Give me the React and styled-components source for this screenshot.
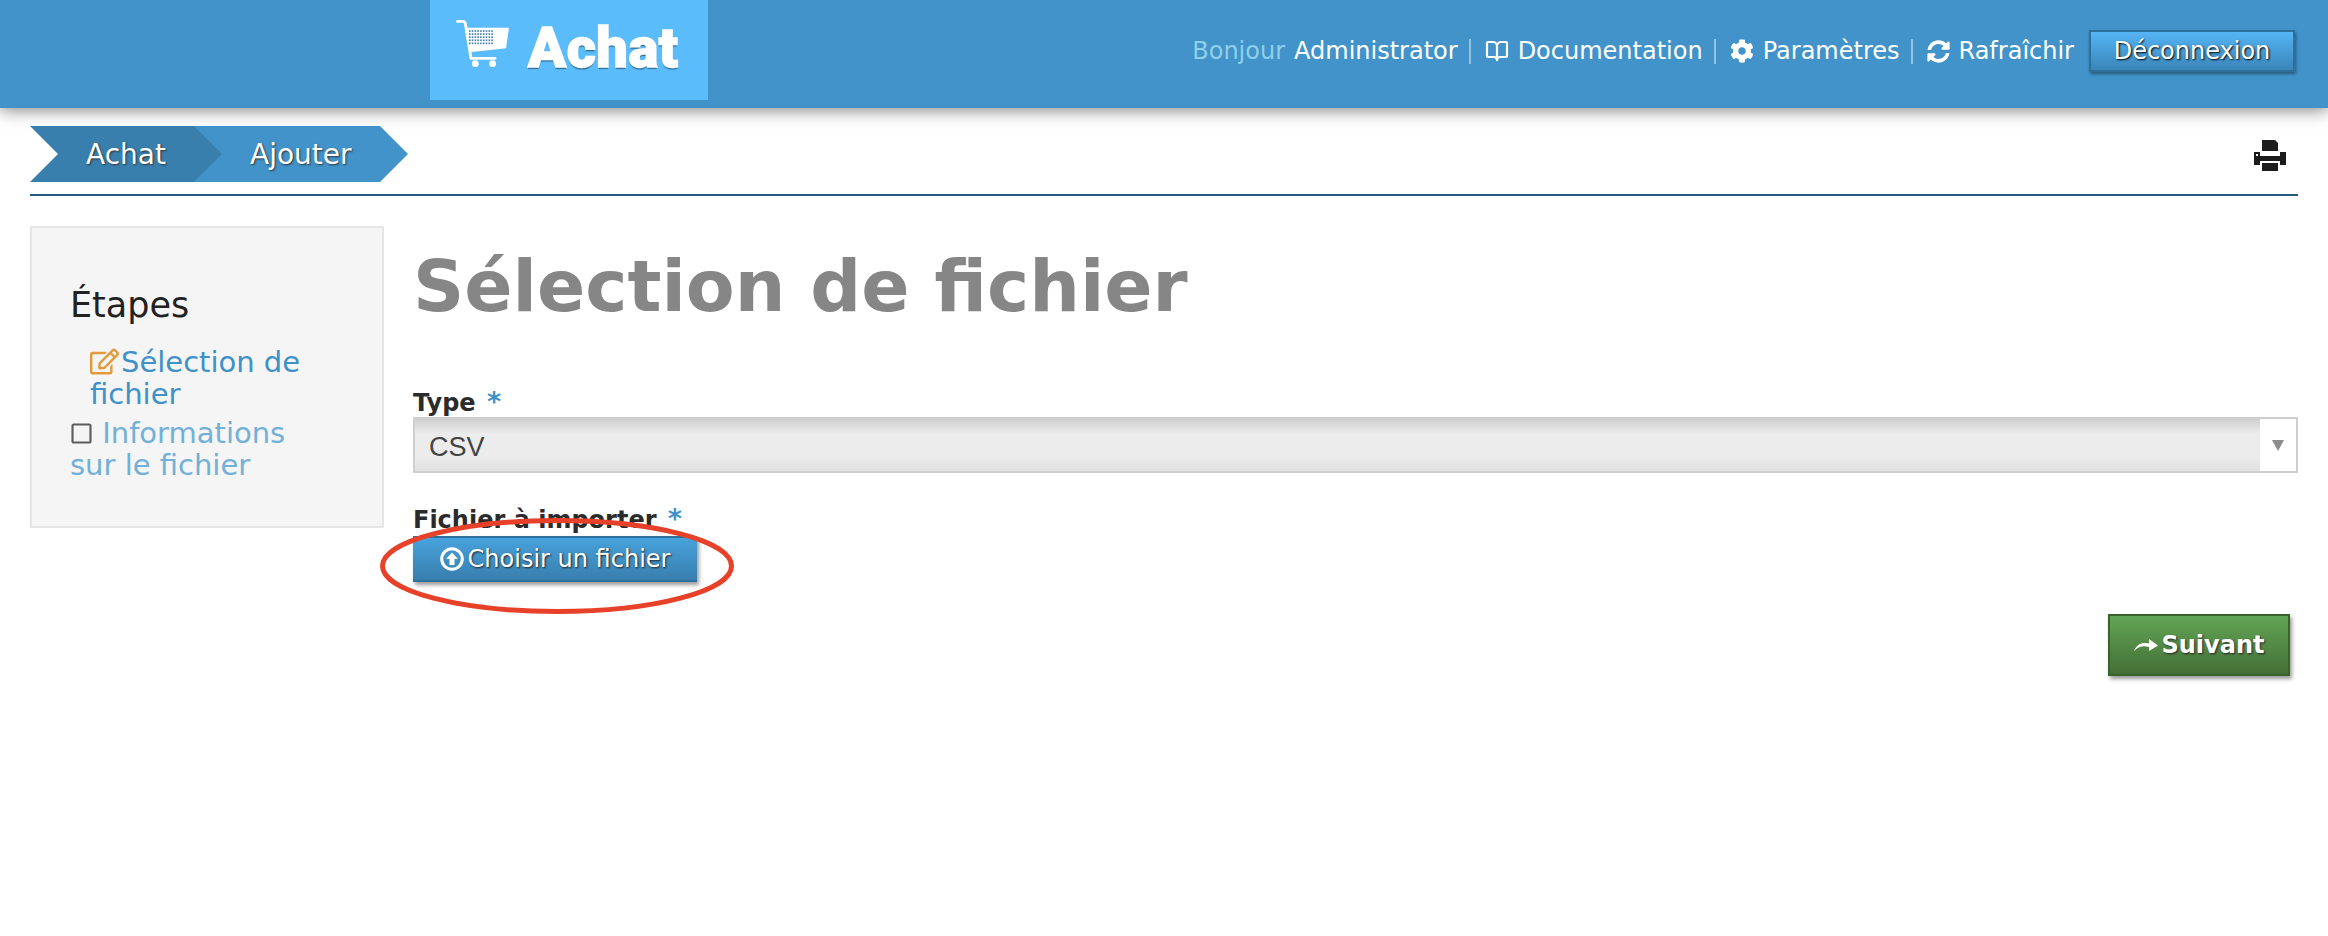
import styled, { createGlobalStyle } from "styled-components";
import { FaCog, FaRegEdit, FaRegSquare, FaSyncAlt } from "react-icons/fa";
import { BookOpen } from "lucide-react";

const GlobalStyle = createGlobalStyle`
  html, body {
    margin: 0;
    background: #fff;
    font-family: "DejaVu Sans", Verdana, sans-serif;
  }
`;

const CartIcon = () => {
  const holes = [];
  for (let row = 0; row < 5; row++) {
    for (let col = 0; col < 9; col++) {
      holes.push(<rect key={row + "-" + col} x={13.4 + col * 2.9} y={11.6 + row * 3.2} width="1.7" height="1.8" fill="#4a86b0" />);
    }
  }
  return (
    <svg width="54" height="50" viewBox="0 0 56 52">
      <path d="M1.500 2.500h6.500l1.500 1.500 6 37h25" fill="none" stroke="#fff" strokeWidth="3" strokeLinecap="round" strokeLinejoin="round" />
      <path d="M9.500 9H55l-3 21.500-38 4z" fill="#fff" />
      {holes}
      <circle cx="20" cy="46.500" r="3.500" fill="#fff" />
      <circle cx="38" cy="46.500" r="3.500" fill="#fff" />
    </svg>
  );
};

const PrintIcon = () => (
  <svg width="32" height="31" viewBox="0 0 32 31">
    <path d="M8 0h13l3 3v8H8z" fill="#1c1c1c" />
    <path d="M0 12h6v4h20v-4h6v13h-6v-4H6v4H0z" fill="#1c1c1c" />
    <path d="M8 23h16v8H8z" fill="#1c1c1c" />
    <path d="M2 14h2v2H2z" fill="#fff" />
  </svg>
);

const UploadIcon = () => (
  <svg width="24" height="24" viewBox="0 0 24 24">
    <circle cx="12" cy="12" r="10.300" fill="none" stroke="#fff" strokeWidth="3" />
    <path d="M12 5.500l6 6.500h-3.500v6h-5v-6H6z" fill="#fff" />
  </svg>
);

const NextArrow = () => (
  <svg width="24" height="14" viewBox="0 0 24 14">
    <path d="M0 13C3 6 8 4 15 5.500V1l9 6.500-9 5.500V9C9 7.500 5 8.500 0 13z" fill="#fff" />
  </svg>
);

const App = () => {
  return (
    <Page>
      <GlobalStyle />
      <Header>
        <Logo>
          <CartIcon />
          <LogoText>Achat</LogoText>
        </Logo>
        <UserNav>
          <Hello>Bonjour</Hello>
          <NavText>Administrator</NavText>
          <Sep />
          <BookOpen size={24} strokeWidth={2.2} color="#fff" />
          <NavText>Documentation</NavText>
          <Sep />
          <FaCog size={24} color="#fff" />
          <NavText>Paramètres</NavText>
          <Sep />
          <FaSyncAlt size={23} color="#fff" />
          <NavText>Rafraîchir</NavText>
          <LogoutButton>Déconnexion</LogoutButton>
        </UserNav>
      </Header>

      <Toolbar>
        <Breadcrumb>
          <Crumb $first>Achat</Crumb>
          <Crumb>Ajouter</Crumb>
        </Breadcrumb>
        <PrintSlot>
          <PrintIcon />
        </PrintSlot>
      </Toolbar>

      <Main>
        <Sidebar>
          <SideTitle>Étapes</SideTitle>
          <StepCurrent>
            <FaRegEdit size={29} color="#e39a3c" />
            Sélection de fichier
          </StepCurrent>
          <StepNext>
            <FaRegSquare size={23} color="#5c5c5c" />
            {" "}Informations sur le fichier
          </StepNext>
        </Sidebar>

        <Content>
          <Title>Sélection de fichier</Title>
          <Label>
            Type <Star>*</Star>
          </Label>
          <SelectBox>
            <SelectValue>CSV</SelectValue>
            <SelectArrow>
              <Triangle />
            </SelectArrow>
          </SelectBox>
          <FileField>
            <Label $spaced>
              Fichier à importer <Star>*</Star>
            </Label>
            <ChooseButton>
              <UploadIcon />
              Choisir un fichier
            </ChooseButton>
            <Circle viewBox="0 0 354 96" preserveAspectRatio="none">
              <ellipse cx="177" cy="48" rx="174.500" ry="45.500" fill="none" stroke="#e8412a" strokeWidth="5" />
            </Circle>
          </FileField>
          <Actions>
            <NextButton>
              <NextArrow />
              Suivant
            </NextButton>
          </Actions>
        </Content>
      </Main>
    </Page>
  );
};

export default App;

const Page = styled.div`
  width: 2328px;
  height: 936px;
  overflow: hidden;
  background: #fff;
`;

const Header = styled.header`
  height: 108px;
  padding: 0 33px 0 430px;
  box-sizing: border-box;
  display: flex;
  justify-content: space-between;
  align-items: flex-start;
  background: #4293ca;
  box-shadow: 0 2px 16px rgba(0, 0, 0, 0.5);
`;

const Logo = styled.div`
  width: 278px;
  height: 100px;
  padding: 19px 0 0 26px;
  box-sizing: border-box;
  display: flex;
  align-items: flex-start;
  gap: 18px;
  background: #5bbcfb;
`;

const LogoText = styled.div`
  margin-top: -1px;
  font-family: Roboto, sans-serif;
  font-weight: 900;
  font-size: 56px;
  line-height: 60px;
  letter-spacing: 0.5px;
  color: #fff;
  -webkit-text-stroke: 1.5px #fff;
  text-shadow: 0 2px 1px #2b6a93;
`;

const UserNav = styled.div`
  display: flex;
  align-items: center;
  height: 42px;
  margin-top: 30px;
  gap: 9px;
  font-size: 24px;
`;

const Hello = styled.span`
  color: #8fcfe8;
`;

const NavText = styled.span`
  color: #fff;
`;

const Sep = styled.span`
  width: 2px;
  height: 25px;
  margin: 0 5px 0 2px;
  background: #8fc4e4;
`;

const LogoutButton = styled.button`
  width: 206px;
  height: 42px;
  margin-left: 6px;
  padding: 0;
  border: 2px solid #2f6f9b;
  background: linear-gradient(#55b5f5, #3a85b9);
  color: #fff;
  font-family: inherit;
  font-size: 24px;
  text-shadow: 1px 1px 2px #000;
  box-shadow: 1px 2px 3px rgba(0, 0, 0, 0.4);
`;

const Toolbar = styled.div`
  margin: 18px 30px 0;
  padding-bottom: 12px;
  display: flex;
  justify-content: space-between;
  align-items: center;
  border-bottom: 2px solid #22597f;
`;

const Breadcrumb = styled.div`
  display: flex;
`;

const Crumb = styled.div`
  height: 56px;
  line-height: 57px;
  font-size: 28px;
  color: #fff;
  text-shadow: 1px 1px 2px #333;
  background: ${(p) => (p.$first ? "#387fae" : "#4293ca")};
  width: ${(p) => (p.$first ? "192px" : "214px")};
  margin-left: ${(p) => (p.$first ? "0" : "-28px")};
  padding-left: 56px;
  box-sizing: border-box;
  position: relative;
  z-index: ${(p) => (p.$first ? 1 : 0)};
  clip-path: ${(p) =>
    p.$first
      ? "polygon(0 0, calc(100% - 28px) 0, 100% 50%, calc(100% - 28px) 100%, 0 100%, 28px 50%)"
      : "polygon(0 0, calc(100% - 28px) 0, 100% 50%, calc(100% - 28px) 100%, 0 100%)"};
`;

const PrintSlot = styled.div`
  display: flex;
  margin: 2px 12px 0 0;
`;

const Main = styled.main`
  margin: 30px 30px 0;
  display: flex;
  align-items: flex-start;
  gap: 29px;
`;

const Sidebar = styled.aside`
  width: 354px;
  height: 302px;
  flex-shrink: 0;
  box-sizing: border-box;
  padding: 54px 56px 0 38px;
  background: #f5f5f5;
  border: 2px solid #e6e6e6;
`;

const SideTitle = styled.h3`
  margin: 0 0 18px;
  font-size: 35px;
  line-height: 46px;
  font-weight: 400;
  color: #222;
`;

const StepCurrent = styled.div`
  padding-left: 20px;
  font-size: 29px;
  line-height: 32px;
  color: #3f91c9;

  svg {
    vertical-align: -4px;
    margin-right: 2px;
  }
`;

const StepNext = styled.div`
  margin-top: 7px;
  font-size: 29px;
  line-height: 32px;
  color: #73b0d8;

  svg {
    vertical-align: -2px;
  }
`;

const Content = styled.div`
  flex: 1;
  min-width: 0;
`;

const Title = styled.h1`
  margin: 0 0 41px;
  font-size: 71.200px;
  line-height: 121px;
  font-weight: 700;
  color: #868686;
`;

const Label = styled.div`
  font-size: 24px;
  line-height: 28px;
  font-weight: 700;
  color: #2b2b2b;
  margin-bottom: ${(p) => (p.$spaced ? "2px" : "0")};
`;

const Star = styled.span`
  margin-left: 3px;
  font-size: 27px;
  color: #3f91c9;
`;

const SelectBox = styled.div`
  height: 56px;
  margin-bottom: 32px;
  display: flex;
  box-sizing: border-box;
  border: 2px solid #cfcfcf;
`;

const SelectValue = styled.div`
  flex: 1;
  padding-left: 14px;
  line-height: 56px;
  font-family: "Liberation Sans", Arial, sans-serif;
  font-size: 27px;
  color: #444;
  background: linear-gradient(#cfcfcf 0, #ececec 28%, #ececec 70%, #e0e0e0 100%);
`;

const SelectArrow = styled.div`
  width: 36px;
  display: flex;
  align-items: center;
  justify-content: center;
  background: #fff;
`;

const Triangle = styled.div`
  width: 0;
  height: 0;
  border-left: 6px solid transparent;
  border-right: 6px solid transparent;
  border-top: 11px solid #8c8c8c;
`;

const FileField = styled.div`
  position: relative;
`;

const ChooseButton = styled.button`
  width: 284px;
  height: 46px;
  padding: 0;
  display: flex;
  align-items: center;
  justify-content: center;
  gap: 4px;
  border: 0;
  border-top: 2px solid #2f6f9b;
  border-bottom: 2px solid #2f6f9b;
  background: linear-gradient(#48a2dc, #387fae);
  color: #fff;
  font-family: inherit;
  font-size: 24px;
  text-shadow: 1px 1px 2px #222;
  box-shadow: 2px 3px 4px rgba(0, 0, 0, 0.4);
`;

const Circle = styled.svg`
  position: absolute;
  left: -33px;
  top: 13px;
  width: 354px;
  height: 96px;
  pointer-events: none;
`;

const Actions = styled.div`
  display: flex;
  justify-content: flex-end;
  margin: 32px 8px 0 0;
`;

const NextButton = styled.button`
  width: 182px;
  height: 62px;
  padding: 0;
  display: flex;
  align-items: center;
  justify-content: center;
  gap: 4px;
  border: 2px solid #386429;
  background: linear-gradient(#63a556, #436f36);
  color: #fff;
  font-family: inherit;
  font-size: 24px;
  font-weight: 700;
  text-shadow: 1px 1px 2px #222;
  box-shadow: 2px 3px 4px rgba(0, 0, 0, 0.4);
`;
